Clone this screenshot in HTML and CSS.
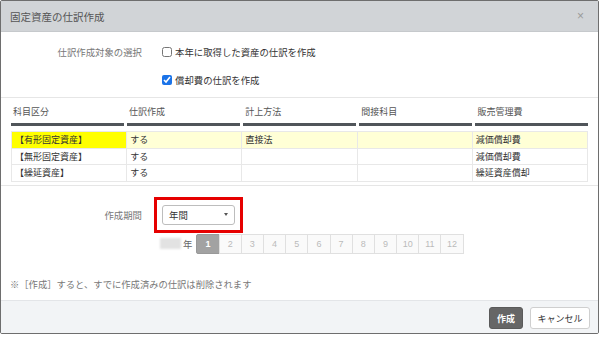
FILE: index.html
```html
<!DOCTYPE html>
<html lang="ja">
<head>
    <meta charset="UTF-8">
    <meta name="viewport" content="width=device-width, initial-scale=1.0">
    <title>固定資産の仕訳作成</title>
    <link rel="stylesheet" href="styles.css">
</head>
<body>
    <div class="modal">
        <div class="modal-header">
            <h1>固定資産の仕訳作成</h1>
            <span class="close">×</span>
        </div>

        <div class="modal-body">
            <div class="form-row">
                <div class="row-label">仕訳作成対象の選択</div>
                <label class="check"><input type="checkbox"> 本年に取得した資産の仕訳を作成</label>
            </div>
            <div class="form-row second">
                <div class="row-label"></div>
                <label class="check"><input type="checkbox" checked> 償却費の仕訳を作成</label>
            </div>

            <div class="asset-section">
                <div class="table-head">
                    <div class="head-cell">科目区分</div>
                    <div class="head-cell">仕訳作成</div>
                    <div class="head-cell">計上方法</div>
                    <div class="head-cell">間接科目</div>
                    <div class="head-cell">販売管理費</div>
                </div>
                <table class="asset-table">
                    <tr class="selected">
                        <td class="mark">【有形固定資産】</td>
                        <td>する</td>
                        <td>直接法</td>
                        <td></td>
                        <td>減価償却費</td>
                    </tr>
                    <tr>
                        <td>【無形固定資産】</td>
                        <td>する</td>
                        <td></td>
                        <td></td>
                        <td>減価償却費</td>
                    </tr>
                    <tr>
                        <td>【繰延資産】</td>
                        <td>する</td>
                        <td></td>
                        <td></td>
                        <td>繰延資産償却</td>
                    </tr>
                </table>
            </div>

            <div class="form-row period">
                <div class="row-label">作成期間</div>
                <div class="highlight">
                    <div class="select-box">
                        <span>年間</span>
                        <span class="caret"></span>
                    </div>
                </div>
            </div>

            <div class="month-row">
                <span class="year-mask"></span>
                <span class="year-unit">年</span>
                <div class="months">
                    <span class="month active">1</span>
                    <span class="month">2</span>
                    <span class="month">3</span>
                    <span class="month">4</span>
                    <span class="month">5</span>
                    <span class="month">6</span>
                    <span class="month">7</span>
                    <span class="month">8</span>
                    <span class="month">9</span>
                    <span class="month">10</span>
                    <span class="month">11</span>
                    <span class="month">12</span>
                </div>
            </div>

            <p class="note">※［作成］すると、すでに作成済みの仕訳は削除されます</p>
        </div>

        <div class="modal-footer">
            <button type="button" class="btn-create">作成</button>
            <button type="button" class="btn-cancel">キャンセル</button>
        </div>
    </div>
</body>
</html>
```

FILE: styles.css
```css
body {
    margin: 0;
    background: #fff;
    font-family: "Noto Sans CJK JP", "Liberation Sans", sans-serif;
    color: #333;
}

.modal {
    width: 599px;
    height: 334px;
    box-sizing: border-box;
    border: 1px solid #6e6e6e;
    border-radius: 2px;
    display: flex;
    flex-direction: column;
    overflow: hidden;
}

.modal-header {
    height: 31px;
    box-sizing: border-box;
    background: #d1d4d7;
    border-bottom: 1px solid #c6c9cc;
    display: flex;
    align-items: center;
    justify-content: space-between;
    padding: 0 14px 0 9px;
}

.modal-header h1 {
    margin: 0;
    font-size: 10.5px;
    font-weight: normal;
    color: #555;
}

.close {
    font-family: "Liberation Sans", sans-serif;
    font-size: 12px;
    color: #9a9a9a;
}

.modal-body {
    flex: 1;
    padding-top: 12px;
}

.form-row {
    display: flex;
    align-items: center;
    height: 16px;
    font-size: 9.4px;
}

.form-row.second {
    margin-top: 12px;
}

.row-label {
    width: 141px;
    text-align: right;
    color: #777;
    margin-right: 19px;
}

.check {
    display: flex;
    align-items: center;
    color: #333;
}

.check input {
    width: 10px;
    height: 10px;
    margin: 0 3px 0 1px;
    accent-color: #1a73e8;
}

.asset-section {
    margin-top: 9px;
    border-top: 1px solid #e6e6e6;
    border-bottom: 1px solid #e6e6e6;
    padding: 0 10px 3px;
}

.table-head {
    display: grid;
    grid-template-columns: repeat(5, 1fr);
    gap: 3.5px;
}

.head-cell {
    font-size: 9px;
    color: #555;
    padding: 7px 2px 5px;
    line-height: 13px;
    border-bottom: 3px solid #50555a;
}

.asset-table {
    width: 100%;
    margin-top: 5px;
    border-collapse: collapse;
    table-layout: fixed;
    font-size: 9px;
}

.asset-table td {
    border: 1px solid #e8e8e8;
    height: 15.5px;
    padding: 0 3px;
    line-height: 15px;
    color: #333;
}

.asset-table tr.selected td {
    background: #ffffd6;
}

.asset-table tr.selected td.mark {
    background: #ffff00;
}

.form-row.period {
    margin-top: 19px;
    height: 20px;
}

.highlight {
    margin-left: 1px;
    outline: 3px solid #e60000;
    outline-offset: 5px;
}

.select-box {
    width: 73px;
    height: 20px;
    box-sizing: border-box;
    border: 1px solid #bdbdbd;
    border-radius: 3px;
    display: flex;
    align-items: center;
    justify-content: space-between;
    padding: 0 6px;
    font-size: 9.4px;
    color: #333;
}

.caret {
    width: 0;
    height: 0;
    border-left: 2.5px solid transparent;
    border-right: 2.5px solid transparent;
    border-top: 3px solid #555;
}

.month-row {
    display: flex;
    align-items: center;
    margin-top: 9px;
    padding-left: 159px;
    height: 20px;
}

.year-mask {
    width: 21px;
    height: 11px;
    background: #e2e2e2;
    filter: blur(1px);
}

.year-unit {
    font-size: 9.4px;
    color: #666;
    margin: 0 4px 0 2px;
}

.months {
    display: flex;
}

.month {
    width: 23.2px;
    height: 20px;
    box-sizing: border-box;
    border: 1px solid #e0e0e0;
    margin-left: -1px;
    background: #fafafa;
    color: #bbb;
    font-family: "Liberation Sans", sans-serif;
    font-size: 9px;
    display: flex;
    align-items: center;
    justify-content: center;
}

.month:first-child {
    margin-left: 0;
}

.month.active {
    background: #a2a2a2;
    border-color: #999;
    color: #fff;
    font-weight: bold;
    border-radius: 2px 0 0 2px;
}

.note {
    margin: 23px 0 0 9px;
    font-size: 9.3px;
    color: #777;
    line-height: 14px;
}

.modal-footer {
    border-top: 1px solid #e3e5e8;
    background: #f2f4f6;
    display: flex;
    justify-content: flex-end;
    gap: 7px;
    padding: 6px 8px 4px;
}

.modal-footer button {
    height: 22px;
    border-radius: 3px;
    font-family: "Noto Sans CJK JP", sans-serif;
    font-size: 9px;
    padding: 0;
    cursor: pointer;
}

.btn-create {
    width: 34px;
    background: #666;
    border: 1px solid #5a5a5a;
    color: #fff;
    font-weight: bold;
}

.btn-cancel {
    width: 60px;
    background: #fff;
    border: 1px solid #cfcfcf;
    color: #333;
}
```
